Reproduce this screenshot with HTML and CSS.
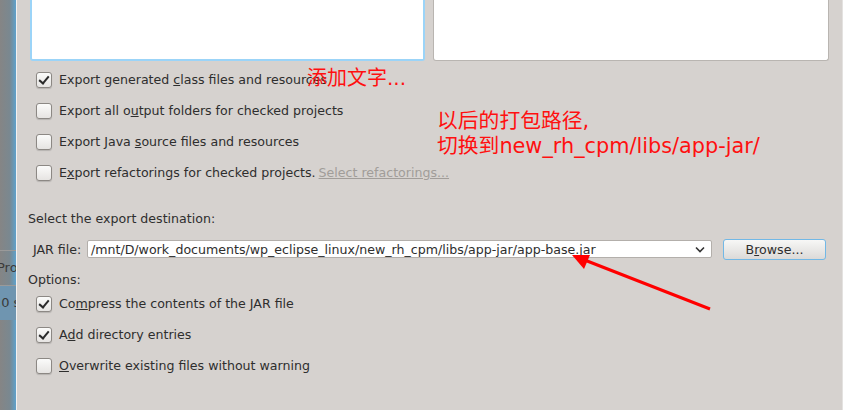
FILE: index.html
```html
<!DOCTYPE html>
<html lang="en">
<head>
    <meta charset="UTF-8">
    <title>JAR Export</title>
    <link rel="stylesheet" href="styles.css">
</head>
<body>

    <div class="side">
        <div class="side-row tab">Pro</div>
        <div class="side-row sel">.0 s</div>
    </div>

    <div class="dialog">
        <div class="lists">
            <div class="list focused"></div>
            <div class="list"></div>
        </div>

        <div class="checks">
            <label class="check"><span class="box on"></span><span>Export generated <u>c</u>lass files and resources</span></label>
            <label class="check"><span class="box"></span><span>Export all o<u>u</u>tput folders for checked projects</span></label>
            <label class="check"><span class="box"></span><span>Export Java <u>s</u>ource files and resources</span></label>
            <label class="check"><span class="box"></span><span>E<u>x</u>port refactorings for checked projects.</span><a class="link">Select refactorings...</a></label>
        </div>

        <div class="section">Select the export destination:</div>
        <div class="dest">
            <span class="dest-label">JAR file:</span>
            <div class="combo">
                <span>/mnt/D/work_documents/wp_eclipse_linux/new_rh_cpm/libs/app-jar/app-base.jar</span>
                <svg class="chevron" width="10" height="7" viewBox="0 0 10 7"><path d="M1 1.5 L5 5.5 L9 1.5" fill="none" stroke="#333" stroke-width="1.6"/></svg>
            </div>
            <button class="browse">B<u>r</u>owse...</button>
        </div>

        <div class="section opts">Options:</div>
        <div class="checks lower">
            <label class="check"><span class="box on"></span><span>Co<u>m</u>press the contents of the JAR file</span></label>
            <label class="check"><span class="box on"></span><span>A<u>d</u>d directory entries</span></label>
            <label class="check"><span class="box"></span><span><u>O</u>verwrite existing files without warning</span></label>
        </div>

        <div class="note note-a">添加文字...</div>
        <div class="note note-b">以后的打包路径,<br>切换到new_rh_cpm/libs/app-jar/</div>
        <svg class="arrow" width="150" height="64" viewBox="0 0 150 64">
            <line x1="140" y1="58" x2="12" y2="8" stroke="#ff0000" stroke-width="3"/>
            <path d="M2 4 L20 4 L14 18 Z" fill="#ff0000"/>
        </svg>
    </div>

</body>
</html>
```

FILE: styles.css
```css
body {
    margin: 0;
    width: 843px;
    height: 410px;
    overflow: hidden;
    display: flex;
    font-family: "DejaVu Sans", sans-serif;
    font-size: 12.6px;
    color: #2e2e2e;
    background-color: #d6d2cf;
}
.side {
    width: 16px;
    flex-shrink: 0;
    background: linear-gradient(to right, #858585, #7a8890 60%, #5fa2cc);
    border-right: 1px solid #f2f2f2;
    overflow: hidden;
    color: #3a3a3a;
    padding-top: 250px;
}
.side-row {
    height: 34px;
    line-height: 34px;
    white-space: nowrap;
    border-top: 1px solid #9a9a9a;
    font-size: 13px;
    margin-left: -3px;
}
.side-row.sel {
    background-color: #6f95b0;
}
.dialog {
    flex: 1;
    position: relative;
    padding: 0 13px 0 13px;
    border-right: 1px solid #e4e2e0;
}
.lists {
    display: grid;
    grid-template-columns: 395px 1fr;
    gap: 8px;
    height: 61px;
}
.list {
    background-color: #fff;
    border: 1px solid #b9b5b1;
    border-top: none;
    border-radius: 0 0 3px 3px;
}
.list.focused {
    border: 2px solid #9bd4f8;
    border-top: none;
    border-radius: 0 0 3px 3px;
}
.checks {
    padding: 3px 0 0 6px;
}
.check {
    display: flex;
    align-items: center;
    height: 31px;
    white-space: nowrap;
}
.box {
    width: 14px;
    height: 14px;
    border: 1px solid #8c8884;
    border-radius: 3px;
    background: linear-gradient(#fbfbfa, #e6e4e2);
    margin-right: 7px;
    box-shadow: 0 1px 1px rgba(0, 0, 0, 0.15);
    position: relative;
}
.box.on::after {
    content: "";
    position: absolute;
    left: 4px;
    top: 1px;
    width: 4px;
    height: 8px;
    border: solid #2a2a2a;
    border-width: 0 2px 2px 0;
    transform: rotate(40deg);
}
.link {
    color: #a19d99;
    text-decoration: underline;
    margin-left: 3px;
}
.section {
    margin-top: 23px;
    margin-left: -2px;
    line-height: 16px;
}
.dest {
    display: flex;
    align-items: center;
    height: 22px;
    margin-top: 11px;
}
.dest-label {
    margin-left: 3px;
    width: 54px;
}
.combo {
    height: 16px;
    background-color: #fff;
    border: 1px solid #b3afab;
    border-radius: 2px;
    display: flex;
    align-items: center;
    justify-content: space-between;
    padding: 0 4px 0 3px;
    width: 616px;
}
.chevron {
    margin-right: 2px;
}
.browse {
    margin-left: 11px;
    width: 103px;
    height: 21px;
    font-family: "DejaVu Sans", sans-serif;
    font-size: 12.6px;
    color: #2e2e2e;
    border: 1px solid #72b8e6;
    border-radius: 3px;
    background: linear-gradient(#f7f7f6, #dcdad8);
    padding: 0;
}
.opts {
    margin-top: 12px;
}
.checks.lower {
    padding-top: 0;
    margin-top: 0;
}
.note {
    position: absolute;
    color: #ff1010;
    font-family: "DejaVu Sans", "Noto Sans CJK SC", sans-serif;
    font-size: 20px;
    line-height: 25px;
}
.note-a {
    left: 290px;
    top: 66px;
}
.note-b {
    left: 420px;
    top: 109px;
    font-size: 20.8px;
}
.arrow {
    position: absolute;
    left: 553px;
    top: 251px;
}
```
